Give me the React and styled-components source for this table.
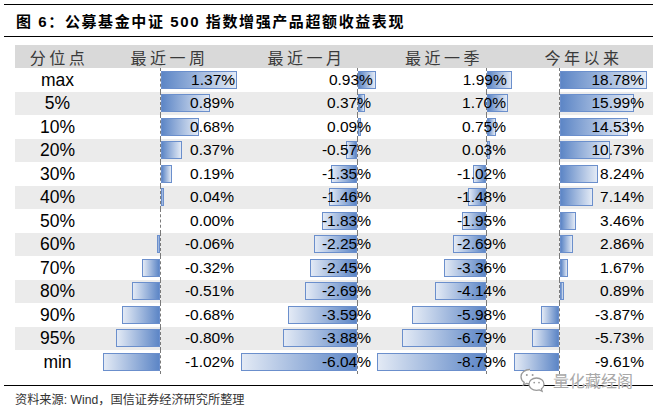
import React from "react";
import styled, { createGlobalStyle } from "styled-components";

const GlobalStyle = createGlobalStyle`
  html, body {
    margin: 0;
    padding: 0;
    background: #fff;
  }
`;

const columns = [
  { name: "最近一周", neg: 60, scale: 55.5, pad: 2 },
  { name: "最近一月", neg: 121, scale: 19.2, pad: 3 },
  { name: "最近一季", neg: 112, scale: 12.4, pad: 5 },
  { name: "今年以来", neg: 48, scale: 4.65, pad: 9 },
];

const rows = [
  ["max", 1.37, 0.93, 1.99, 18.78],
  ["5%", 0.89, 0.37, 1.7, 15.99],
  ["10%", 0.68, 0.09, 0.75, 14.53],
  ["20%", 0.37, -0.57, 0.03, 10.73],
  ["30%", 0.19, -1.35, -1.02, 8.24],
  ["40%", 0.04, -1.46, -1.48, 7.14],
  ["50%", 0.0, -1.83, -1.95, 3.46],
  ["60%", -0.06, -2.25, -2.69, 2.86],
  ["70%", -0.32, -2.45, -3.36, 1.67],
  ["80%", -0.51, -2.69, -4.14, 0.89],
  ["90%", -0.68, -3.59, -5.98, -3.87],
  ["95%", -0.8, -3.88, -6.79, -5.73],
  ["min", -1.02, -6.04, -8.79, -9.61],
];

const Page = styled.div`
  position: relative;
  width: 653px;
  height: 409px;
  overflow: hidden;
  background: #fff;
`;

const Rule = styled.div`
  margin: ${(p) => p.$top}px 0 0 4px;
  border-top: 1.5px solid #000;
`;

const Title = styled.div`
  height: 31px;
  display: flex;
  align-items: center;
  padding-left: 16px;
  font-family: "Liberation Sans", "Noto Sans CJK SC", sans-serif;
  font-weight: 700;
  font-size: 15px;
  letter-spacing: 1.6px;
  color: #000;
`;

const Table = styled.div`
  margin: 8px 0 0 15px;
`;

const Row = styled.div`
  display: grid;
  grid-template-columns: 85px 136px 138px 137px 142px;
  height: ${(p) => (p.$head ? 23 : 23.5)}px;
  background: ${(p) => (p.$head ? "#d9d9d9" : p.$alt ? "#ebebeb" : "#fff")};
`;

const HeadCell = styled.div`
  display: flex;
  align-items: center;
  justify-content: center;
  padding-left: 3px;
  font-family: "Noto Sans CJK SC", serif;
  font-size: 16px;
  letter-spacing: 3.5px;
  color: #3a3a3a;
`;

const Label = styled.div`
  display: flex;
  align-items: center;
  justify-content: center;
  padding-top: 1px;
  font-family: "Liberation Sans", Arial, sans-serif;
  font-size: 17.5px;
  color: #000;
`;

const Cell = styled.div`
  display: grid;
  & > * {
    grid-area: 1 / 1;
  }
`;

const Track = styled.div`
  display: flex;
  height: 100%;
`;

const NegSide = styled.div`
  width: ${(p) => p.$w}px;
  display: flex;
  justify-content: flex-end;
  align-items: center;
`;

const Zero = styled.div`
  width: 0;
  border-left: 1px dashed #7a7a7a;
  position: relative;
  z-index: 1;
`;

const PosSide = styled.div`
  flex: 1;
  display: flex;
  align-items: center;
`;

const Bar = styled.div`
  box-sizing: border-box;
  height: 18px;
  flex-shrink: 0;
  border: 1.5px solid #6b8fcc;
  background: linear-gradient(
    ${(p) => (p.$neg ? "to left" : "to right")},
    #5d86c6,
    #e3eaf5
  );
`;

const Value = styled.div`
  display: flex;
  align-items: center;
  justify-content: flex-end;
  padding-right: ${(p) => p.$pad}px;
  font-family: "Liberation Sans", Arial, sans-serif;
  font-size: 15.5px;
  color: #000;
  position: relative;
  z-index: 2;
`;

const Footer = styled.div`
  padding: 4px 0 0 15px;
  font-family: "Liberation Sans", "Noto Sans CJK SC", sans-serif;
  font-size: 12.2px;
  color: #333;
`;

const Mark = styled.div`
  position: absolute;
  left: 519px;
  top: 367px;
  display: flex;
  align-items: center;
  gap: 7px;
  font-family: "Noto Sans CJK SC", sans-serif;
  font-size: 16px;
  line-height: 1;
  color: #a8a8a8;
  text-shadow: 0 0 1px #fff, 0 0 1px #fff;
`;

const fmt = (v) => `${v.toFixed(2)}%`;

const DataCell = ({ col, v }) => {
  const w = Math.abs(v) * col.scale;
  const bar = w > 0 ? <Bar $neg={v < 0} style={{ width: Math.max(w, 3) }} /> : null;
  return (
    <Cell>
      <Track>
        <NegSide $w={col.neg}>{v < 0 && bar}</NegSide>
        <Zero />
        <PosSide>{v > 0 && bar}</PosSide>
      </Track>
      <Value $pad={col.pad}>{fmt(v)}</Value>
    </Cell>
  );
};

const WeChat = () => (
  <svg width="27" height="26" viewBox="0 0 27 26" fill="none" stroke="#9a9a9a" strokeWidth="1.3">
    <path d="M11 2.5c-5 0-9 3.2-9 7.3 0 2.3 1.2 4.3 3.2 5.6L4.4 18l3-1.6c1.1.3 2.3.5 3.6.5" fill="#fff" />
    <circle cx="7.8" cy="8" r="1" fill="#9a9a9a" stroke="none" />
    <circle cx="13.6" cy="8" r="1" fill="#9a9a9a" stroke="none" />
    <path d="M17.5 11c4.3 0 7.5 2.8 7.5 6.2 0 1.9-1 3.6-2.6 4.7l.7 2.4-2.7-1.4c-.9.3-1.9.4-2.9.4-4.3 0-7.5-2.8-7.5-6.1S13.2 11 17.5 11z" fill="#fff" />
    <circle cx="15.2" cy="15.6" r=".9" fill="#9a9a9a" stroke="none" />
    <circle cx="20" cy="15.6" r=".9" fill="#9a9a9a" stroke="none" />
  </svg>
);

export default function App() {
  return (
    <Page>
      <GlobalStyle />
      <Rule $top={4} />
      <Title>图 6：公募基金中证 500 指数增强产品超额收益表现</Title>
      <Rule $top={0} />
      <Table>
        <Row $head>
          <HeadCell>分位点</HeadCell>
          {columns.map((c) => (
            <HeadCell key={c.name}>{c.name}</HeadCell>
          ))}
        </Row>
        {rows.map(([label, ...vals], i) => (
          <Row key={label} $alt={i % 2 === 1}>
            <Label>{label}</Label>
            {vals.map((v, j) => (
              <DataCell key={j} col={columns[j]} v={v} />
            ))}
          </Row>
        ))}
      </Table>
      <Rule $top={11} />
      <Footer>资料来源: Wind，国信证券经济研究所整理</Footer>
      <Mark>
        <WeChat />
        <span>量化藏经阁</span>
      </Mark>
    </Page>
  );
}
